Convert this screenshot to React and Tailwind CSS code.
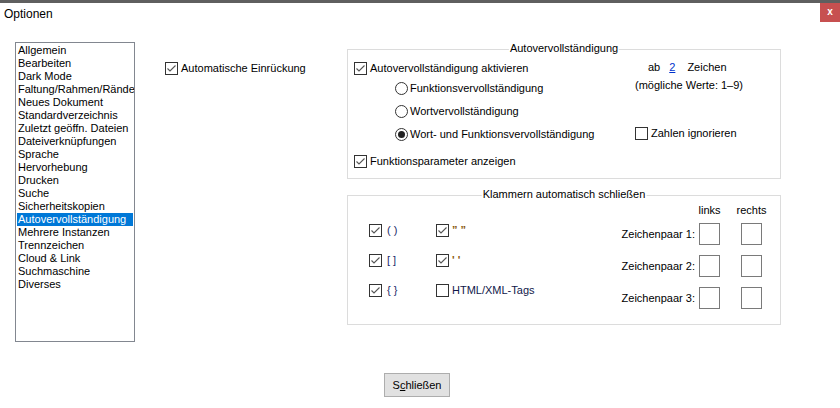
import React from "react";

/* ===================== SMALL CONTROLS ===================== */
const Check = ({ on }) => (
  <span className="w-[13px] h-[13px] shrink-0 border border-[#333] bg-white flex items-center justify-center">
    {on && (
      <svg width="11" height="11" viewBox="0 0 11 11">
        <path d="M1.5 5.5 L4 8 L9.5 2.5" fill="none" stroke="#555" strokeWidth="1.1" />
      </svg>
    )}
  </span>
);

const Radio = ({ on }) => (
  <span className="w-[13px] h-[13px] shrink-0 rounded-full border border-[#333] bg-white flex items-center justify-center">
    {on && <span className="w-[7px] h-[7px] rounded-full bg-[#222]" />}
  </span>
);

const Box = () => <span className="w-[21px] h-[22px] shrink-0 border border-[#7a7a7a] bg-white" />;

const pages = [
  "Allgemein",
  "Bearbeiten",
  "Dark Mode",
  "Faltung/Rahmen/Ränder",
  "Neues Dokument",
  "Standardverzeichnis",
  "Zuletzt geöffn. Dateien",
  "Dateiverknüpfungen",
  "Sprache",
  "Hervorhebung",
  "Drucken",
  "Suche",
  "Sicherheitskopien",
  "Autovervollständigung",
  "Mehrere Instanzen",
  "Trennzeichen",
  "Cloud & Link",
  "Suchmaschine",
  "Diverses",
];

/* ============================ MAIN ============================ */
const App = () => {
  return (
    <div className="w-[840px] h-[408px] bg-white flex flex-col text-[11px] leading-[13px] text-black font-['Liberation_Sans',Arial,sans-serif] overflow-hidden">
      {/* desktop strip */}
      <div className="h-[3px] bg-[#5f5f5f]" />

      {/* title bar */}
      <div className="h-[22px] flex justify-between">
        <span className="pl-[4px] pt-[3px] text-[12px] leading-[16px]">Optionen</span>
        <span className="w-[20px] h-[19px] bg-[#c75050] text-white font-bold text-[10px] leading-[17px] text-center">
          x
        </span>
      </div>

      {/* main */}
      <div className="flex items-start">
        {/* page list */}
        <div className="ml-[15px] mt-[17px] w-[120px] h-[300px] border border-[#828790] p-[1px] overflow-hidden">
          {pages.map((p) => (
            <div
              key={p}
              className={`h-[13px] pl-[1px] whitespace-nowrap ${
                p === "Autovervollständigung" ? "bg-[#0078d7] text-white" : ""
              }`}
            >
              {p}
            </div>
          ))}
        </div>

        {/* middle column */}
        <div className="ml-[30px] mt-[37px] w-[182px] flex items-center gap-[3px]">
          <Check on />
          <span>Automatische Einrückung</span>
        </div>

        {/* right column */}
        <div className="mt-[24px] flex flex-col gap-[16px]">
          {/* Autovervollständigung */}
          <div className="relative w-[434px] h-[130px] border border-[#dcdcdc] flex">
            <span className="absolute -top-[8px] left-1/2 -translate-x-1/2 bg-white px-[1px] whitespace-nowrap">
              Autovervollständigung
            </span>

            <div className="w-[287px] pl-[6px] pt-[12px] flex flex-col">
              <div className="h-[13px] flex items-center gap-[3px]">
                <Check on />
                <span>Autovervollständigung aktivieren</span>
              </div>
              <div className="pl-[41px] mt-[7px] flex flex-col gap-[10px]">
                <div className="h-[13px] flex items-center gap-[2px]">
                  <Radio />
                  <span>Funktionsvervollständigung</span>
                </div>
                <div className="h-[13px] flex items-center gap-[2px]">
                  <Radio />
                  <span>Wortvervollständigung</span>
                </div>
                <div className="h-[13px] flex items-center gap-[2px]">
                  <Radio on />
                  <span>Wort- und Funktionsvervollständigung</span>
                </div>
              </div>
              <div className="mt-[14px] h-[13px] flex items-center gap-[3px]">
                <Check on />
                <span>Funktionsparameter anzeigen</span>
              </div>
            </div>

            <div className="pt-[11px] flex flex-col">
              <div className="h-[13px] pl-[13px] flex whitespace-nowrap">
                <span>ab</span>
                <span className="ml-[9px] text-[#0033cc] underline">2</span>
                <span className="ml-[12px]">Zeichen</span>
              </div>
              <div className="mt-[5px] h-[13px] whitespace-nowrap">(mögliche Werte: 1–9)</div>
              <div className="mt-[35px] h-[13px] flex items-center gap-[3px]">
                <Check />
                <span>Zahlen ignorieren</span>
              </div>
            </div>
          </div>

          {/* Klammern */}
          <div className="relative w-[434px] h-[130px] border border-[#dcdcdc] flex justify-between">
            <span className="absolute -top-[8px] left-1/2 -translate-x-1/2 bg-white px-[1px] whitespace-nowrap">
              Klammern automatisch schließen
            </span>

            <div className="pl-[21px] pt-[28px] flex flex-col gap-[17px]">
              {[
                ["( )", true, "\u201d \u201d", true],
                ["[ ]", true, "' '", true],
                ["{ }", true, "HTML/XML-Tags", false],
              ].map(([a, aOn, b, bOn]) => (
                <div key={a} className="h-[13px] flex items-center">
                  <div className="w-[67px] flex items-center gap-[5px]">
                    <Check on={aOn} />
                    <span className="text-[#1a2a6a]">{a}</span>
                  </div>
                  <div className="flex items-center gap-[3px]">
                    <Check on={bOn} />
                    <span className={bOn ? "text-[#8a5a10] font-bold" : "text-[#10184a]"}>{b}</span>
                  </div>
                </div>
              ))}
            </div>

            <div className="pt-[8px] pr-[18px] flex flex-col">
              <div className="h-[13px] flex justify-end">
                <span className="w-[21px] flex justify-center">links</span>
                <span className="ml-[21px] w-[21px] flex justify-center">rechts</span>
              </div>
              <div className="mt-[6px] flex flex-col gap-[10px]">
                {[1, 2, 3].map((n) => (
                  <div key={n} className="flex items-center">
                    <span className="whitespace-nowrap">Zeichenpaar {n}:</span>
                    <span className="ml-[4px] flex">
                      <Box />
                    </span>
                    <span className="ml-[21px] flex">
                      <Box />
                    </span>
                  </div>
                ))}
              </div>
            </div>
          </div>
        </div>
      </div>

      {/* button */}
      <div className="ml-[384px] mt-[31px] w-[66px] h-[24px] bg-[#e1e1e1] border border-[#adadad] flex items-center justify-center">
        <span>
          S<span className="underline">c</span>hließen
        </span>
      </div>
    </div>
  );
};

export default App;
